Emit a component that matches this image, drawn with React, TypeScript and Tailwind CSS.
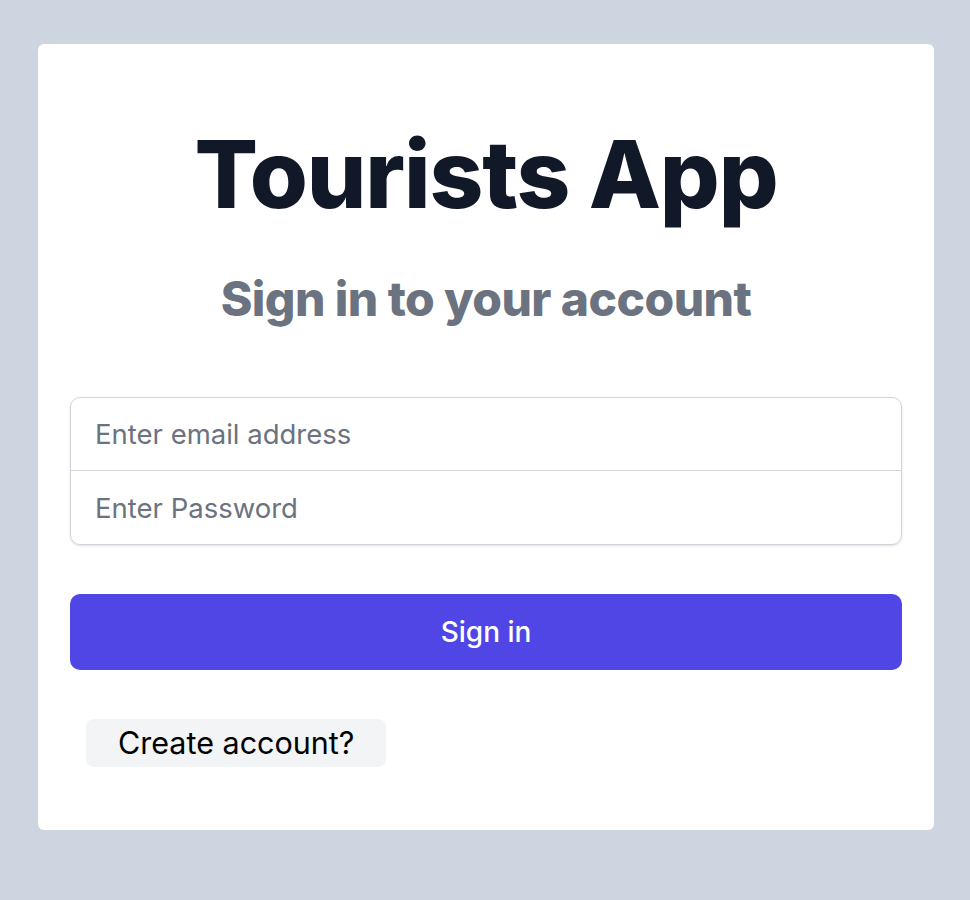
import React from 'react';

export default function App() {
  return (
    <div className="min-h-screen bg-[#cdd5e1] pt-[44px] font-['Inter',sans-serif]">
      <div className="ml-[38px] w-[896px] rounded-md bg-white px-8 pt-[83px] pb-[63px]">
        <h1 className="text-center text-[94px] leading-none font-extrabold tracking-[-0.012em] text-[#111827]">
          Tourists App
        </h1>
        <h2 className="mt-[54px] text-center text-[48px] leading-none font-extrabold tracking-[-0.012em] text-[#6b7280]">
          Sign in to your account
        </h2>

        <form className="mt-[74px]" onSubmit={(e) => e.preventDefault()}>
          <div className="overflow-hidden rounded-[10px] border border-[#d1d5db] shadow-sm">
            <input
              type="email"
              placeholder="Enter email address"
              className="block h-[72px] w-full px-6 text-[27.5px] text-[#111827] placeholder:text-[#6b7280] outline-none"
            />
            <input
              type="password"
              placeholder="Enter Password"
              className="block h-[74px] w-full border-t border-[#d1d5db] px-6 text-[27.5px] text-[#111827] placeholder:text-[#6b7280] outline-none"
            />
          </div>

          <button
            type="submit"
            className="mt-[49px] flex h-[76px] w-full items-center justify-center rounded-[10px] bg-[#4f46e5] text-[28px] font-medium text-white"
          >
            Sign in
          </button>

          <button
            type="button"
            className="mt-[49px] ml-4 flex h-12 items-center rounded-lg bg-[#f3f4f6] px-8 text-[30.5px] text-black"
          >
            Create account?
          </button>
        </form>
      </div>
    </div>
  );
}
